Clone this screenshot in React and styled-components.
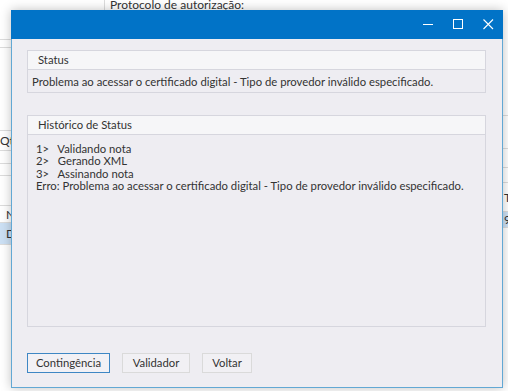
import styled, { createGlobalStyle } from "styled-components";

const Global = createGlobalStyle`
  html, body { margin: 0; padding: 0; }
  body {
    font-family: "Lato", "Open Sans", sans-serif;
    background: #fff;
  }
`;

const Desktop = styled.div`
  position: relative;
  width: 508px;
  height: 391px;
  overflow: hidden;
  background: #fff;
`;

// the main app window lying behind the dialog
const BackApp = styled.div`
  height: 100%;
  display: flex;
  font-size: 12px;
  color: #333;
`;

const Strip = styled.div`
  width: ${(p) => p.$w}px;
  display: flex;
  flex-direction: column;
  overflow: hidden;
`;

const Cell = styled.div`
  height: ${(p) => p.$h}px;
  flex-shrink: 0;
  box-sizing: border-box;
  border-bottom: 1px solid #dcdcdc;
  background: ${(p) => (p.$sel ? "#cce0f4" : "transparent")};
  padding-left: ${(p) => p.$pl || 0}px;
  line-height: ${(p) => p.$h}px;
  white-space: nowrap;
`;

const Middle = styled.div`
  flex: 1;
`;

const TopLabel = styled.div`
  margin-left: 93px;
  height: 10px;
  border-left: 1px solid #dcdcdc;
  padding-left: 5px;
  line-height: 10px;
  white-space: nowrap;
  overflow: hidden;
`;

const Window = styled.div`
  position: absolute;
  left: 11px;
  top: 10px;
  width: 492px;
  height: 378px;
  box-sizing: border-box;
  border: 1px solid #62a8d4;
  border-top: none;
  background: #eeedf2;
  box-shadow: 0 0 10px rgba(0, 0, 0, 0.25);
  display: flex;
  flex-direction: column;
`;

const TitleBar = styled.div`
  height: 29px;
  margin: 0 -1px;
  background: #0173c7;
  display: flex;
  justify-content: flex-end;
  align-items: stretch;
`;

const Ctrl = styled.div`
  width: 30px;
  display: flex;
  align-items: center;
  justify-content: center;
`;

const Body = styled.div`
  flex: 1;
  padding: 11px 16px 0 15px;
  display: flex;
  flex-direction: column;
  gap: 22px;
`;

const Group = styled.div`
  border: 1px solid #d6d6de;
  display: flex;
  flex-direction: column;
  height: ${(p) => (p.$h ? p.$h + "px" : "auto")};
  box-sizing: border-box;
`;

const GroupHead = styled.div`
  height: 18px;
  line-height: 18px;
  background: #f6f6f8;
  border-bottom: 1px solid #d6d6de;
  padding-left: 10px;
  font-size: 11.3px;
  color: #333;
`;

const GroupText = styled.div`
  padding: 4px 4px 3px 4px;
  font-size: 11.3px;
  line-height: 15px;
  color: #333;
  white-space: nowrap;
`;

const Log = styled.div`
  flex: 1;
  padding: 8px 8px;
  font-size: 11.3px;
  line-height: 12.4px;
  color: #333;
  white-space: pre;
`;

const Buttons = styled.div`
  margin-top: 4px;
  display: flex;
  gap: 12px;
`;

const Button = styled.div`
  height: 20px;
  box-sizing: border-box;
  width: ${(p) => p.$w}px;
  border: 1px solid ${(p) => (p.$primary ? "#3e87c4" : "#dadada")};
  background: ${(p) => (p.$primary ? "#f2f1f5" : "#f1f0f4")};
  font-size: 11.3px;
  line-height: 18px;
  color: #333;
  text-align: center;
`;

export default function App() {
  return (
    <Desktop>
      <Global />
      <BackApp>
        <Strip $w={11}>
          <Cell $h={40} />
          <Cell $h={8} />
          <Cell $h={83} />
          <Cell $h={20}>Qtd</Cell>
          <Cell $h={13} />
          <Cell $h={12} />
          <Cell $h={30} />
          <Cell $h={17} $pl={6}>N</Cell>
          <Cell $h={22} $sel $pl={6}>D</Cell>
        </Strip>
        <Middle>
          <TopLabel>Protocolo de autorização:</TopLabel>
        </Middle>
        <Strip $w={5}>
          <Cell $h={116} />
          <Cell $h={33} />
          <Cell $h={19} />
          <Cell $h={15} />
          <Cell $h={29} $pl={1}>T</Cell>
          <Cell $h={16} $sel $pl={1}>9</Cell>
        </Strip>
      </BackApp>
      <Window>
        <TitleBar>
          <Ctrl>
            <svg width="11" height="11" viewBox="0 0 11 11">
              <path d="M0 5.5H10" stroke="#fff" strokeWidth="1" />
            </svg>
          </Ctrl>
          <Ctrl>
            <svg width="11" height="11" viewBox="0 0 11 11">
              <rect x="0.5" y="0.5" width="9" height="9" fill="none" stroke="#fff" strokeWidth="1" />
            </svg>
          </Ctrl>
          <Ctrl>
            <svg width="11" height="11" viewBox="0 0 11 11">
              <path d="M0.5 0.5L10 10M10 0.5L0.5 10" stroke="#fff" strokeWidth="1.1" />
            </svg>
          </Ctrl>
        </TitleBar>
        <Body>
          <Group>
            <GroupHead>Status</GroupHead>
            <GroupText>
              Problema ao acessar o certificado digital - Tipo de provedor inválido especificado.
            </GroupText>
          </Group>
          <Group $h={212}>
            <GroupHead>Histórico de Status</GroupHead>
            <Log>
              {"1>   Validando nota\n2>   Gerando XML\n3>   Assinando nota\nErro: Problema ao acessar o certificado digital - Tipo de provedor inválido especificado."}
            </Log>
          </Group>
          <Buttons>
            <Button $primary $w={83}>Contingência</Button>
            <Button $w={68}>Validador</Button>
            <Button $w={50}>Voltar</Button>
          </Buttons>
        </Body>
      </Window>
    </Desktop>
  );
}
